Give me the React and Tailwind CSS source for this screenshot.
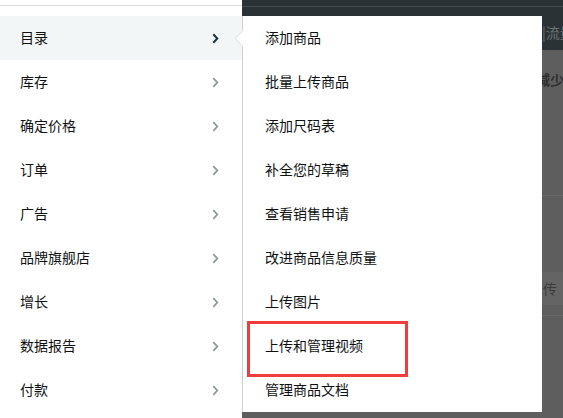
import React from "react";

const leftItems = ["目录", "库存", "确定价格", "订单", "广告", "品牌旗舰店", "增长", "数据报告", "付款"];
const subItems = ["添加商品", "批量上传商品", "添加尺码表", "补全您的草稿", "查看销售申请", "改进商品信息质量", "上传图片", "上传和管理视频", "管理商品文档"];

function Chevron({ active }) {
  return (
    <svg width="7" height="11" viewBox="0 0 7 11" className="shrink-0">
      <path
        d="M1.3 1.2 L5.3 5.5 L1.3 9.8"
        fill="none"
        stroke={active ? "#17343d" : "#8c9595"}
        strokeWidth={active ? "2" : "1.7"}
        strokeLinecap="butt"
      />
    </svg>
  );
}

export default function App() {
  return (
    <div
      className="relative w-[563px] h-[418px] overflow-hidden bg-white flex"
      style={{ fontFamily: '"Noto Sans CJK SC", "Noto Sans", sans-serif' }}
    >
      {/* left menu */}
      <div className="w-[242px] h-full flex flex-col bg-white shrink-0">
        <div className="h-[16px] flex flex-col">
          <div className="h-[5px]" />
          <div className="h-px bg-[#dcdcdc]" />
        </div>
        <div className="flex-1 flex flex-col">
          {leftItems.map((t, i) => (
            <div
              key={t}
              className={`h-[44px] flex items-center justify-between pl-[20px] pr-[23px] ${i === 0 ? "bg-[#f3f6f6]" : ""}`}
            >
              <span className="text-[14px] leading-none text-[#0f1111] pb-[3px]">{t}</span>
              <Chevron active={i === 0} />
            </div>
          ))}
        </div>
      </div>

      {/* right column */}
      <div className="flex-1 flex flex-col bg-[#5e5e5e]">
        <div className="h-[16px] bg-[#2b3235] flex flex-col">
          <div className="h-[6px]" />
          <div className="h-px bg-[#454c4f]" />
        </div>
        <div className="flex flex-1">
          <div className="w-[300px] h-[396px] bg-white border-l border-[#cfcfcf] flex flex-col shrink-0">
            {subItems.map((t) => (
              <div key={t} className="h-[44px] flex items-center pl-[22px]">
                <span className="text-[14px] leading-none text-[#0f1111] pb-[3px]">{t}</span>
              </div>
            ))}
          </div>
          <div className="flex-1 flex flex-col overflow-hidden">
            <div className="h-[34px] bg-[#2b3235] flex items-center overflow-hidden">
              <span className="whitespace-nowrap text-[14px] leading-none text-[#6d7476] pb-[3px]">|流量</span>
            </div>
            <div className="h-[60px] flex items-center overflow-hidden">
              <span className="whitespace-nowrap text-[14px] leading-none font-bold text-[#2f2f2f] -ml-[6px] pb-[3px]">减少过</span>
            </div>
            <div className="h-[85px]" />
            <div className="h-px bg-[#6a6a6a]" />
            <div className="h-[76px]" />
            <div className="h-[33px] bg-[#646464] flex items-center overflow-hidden">
              <span className="whitespace-nowrap text-[14px] leading-none text-[#3c3c3c] ml-px pb-[2px]">传</span>
            </div>
            <div className="h-[10px]" />
            <div className="h-px bg-[#6a6a6a]" />
          </div>
        </div>
      </div>

      {/* notch pointer */}
      <svg
        className="absolute left-[234px] top-[30px]"
        width="10"
        height="17"
        viewBox="0 0 10 17"
      >
        <polygon points="0.5,8.5 9,0 10,0 10,17 9,17" fill="#ffffff" />
        <path d="M9 0.5 L1 8.5 L9 16.5" fill="none" stroke="#e6e9e9" strokeWidth="1.2" />
      </svg>

      {/* red annotation box */}
      <div className="absolute left-[247px] top-[321px] w-[161px] h-[56px] border-[3px] border-[#f23c3c]" />
    </div>
  );
}
